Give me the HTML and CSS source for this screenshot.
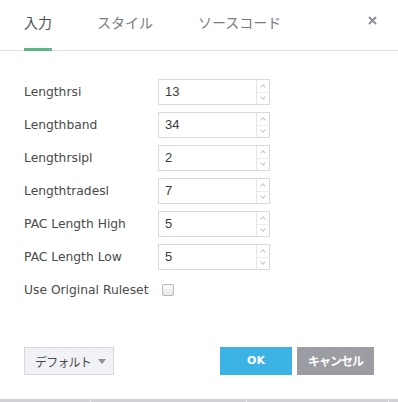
FILE: index.html
```html
<!DOCTYPE html>
<html lang="ja">
<head>
    <meta charset="UTF-8">
    <title>Inputs</title>
    <link rel="stylesheet" href="styles.css">
</head>
<body>
    <div class="dialog">
        <header class="tabs">
            <div class="tab active">入力</div>
            <div class="tab">スタイル</div>
            <div class="tab">ソースコード</div>
            <div class="close">
                <svg width="9" height="9" viewBox="0 0 9 9"><path d="M1 1L8 8M8 1L1 8" stroke="#8c8f96" stroke-width="2"/></svg>
            </div>
        </header>

        <main class="form">
            <div class="row">
                <label>Lengthrsi</label>
                <div class="spin"><span class="value">13</span><span class="arrows"><i class="up"></i><i class="down"></i></span></div>
            </div>
            <div class="row">
                <label>Lengthband</label>
                <div class="spin"><span class="value">34</span><span class="arrows"><i class="up"></i><i class="down"></i></span></div>
            </div>
            <div class="row">
                <label>Lengthrsipl</label>
                <div class="spin"><span class="value">2</span><span class="arrows"><i class="up"></i><i class="down"></i></span></div>
            </div>
            <div class="row">
                <label>Lengthtradesl</label>
                <div class="spin"><span class="value">7</span><span class="arrows"><i class="up"></i><i class="down"></i></span></div>
            </div>
            <div class="row">
                <label>PAC Length High</label>
                <div class="spin"><span class="value">5</span><span class="arrows"><i class="up"></i><i class="down"></i></span></div>
            </div>
            <div class="row">
                <label>PAC Length Low</label>
                <div class="spin"><span class="value">5</span><span class="arrows"><i class="up"></i><i class="down"></i></span></div>
            </div>
            <div class="row check-row">
                <span class="check-label">Use Original Ruleset</span>
                <span class="checkbox"></span>
            </div>
        </main>

        <footer class="actions">
            <div class="defaults"><span>デフォルト</span><span class="caret"></span></div>
            <div class="btn ok">OK</div>
            <div class="btn cancel">キャンセル</div>
        </footer>

        <div class="bottom-edge">
            <span class="tick t1"></span>
            <span class="tick t2"></span>
            <span class="tick t3"></span>
        </div>
    </div>
</body>
</html>
```

FILE: styles.css
```css
body {
    margin: 0;
    padding: 0;
    background-color: #fff;
    font-family: "DejaVu Sans", sans-serif;
    color: #4a4a4a;
}

.dialog {
    width: 398px;
    height: 402px;
    position: relative;
    overflow: hidden;
}

.tabs {
    display: flex;
    align-items: flex-end;
    height: 50px;
    padding: 0 0 0 24px;
    border-bottom: 1px solid #e0e3eb;
}

.tab {
    font-family: "Noto Sans CJK JP", sans-serif;
    font-size: 14px;
    line-height: 20px;
    color: #787b86;
    padding-bottom: 16px;
    margin-right: 45px;
    margin-bottom: -1px;
    border-bottom: 3px solid transparent;
}

.tab.active {
    color: #4b4f58;
    border-bottom-color: #5cb88b;
}

.close {
    margin-left: auto;
    align-self: flex-start;
    padding: 16px 21px 0 0;
    line-height: 0;
}

.form {
    display: flex;
    flex-direction: column;
    gap: 7px;
    padding: 28px 24px 0;
}

.row {
    display: flex;
    align-items: center;
    height: 26px;
}

.row label {
    width: 134px;
    font-size: 12.3px;
}

.spin {
    display: flex;
    width: 110px;
    height: 24px;
    border: 1px solid #d6d9e0;
}

.value {
    flex: 1;
    font-family: "Liberation Sans", Arial, sans-serif;
    font-size: 13px;
    line-height: 24px;
    padding-left: 6px;
    color: #3b3b3b;
}

.arrows {
    width: 12px;
    display: flex;
    flex-direction: column;
    border-left: 1px solid #e3e5ea;
}

.arrows i {
    flex: 1;
    position: relative;
}

.arrows .up {
    border-bottom: 1px solid #eceef2;
}

.arrows i::after {
    content: "";
    position: absolute;
    left: 4px;
    width: 3px;
    height: 3px;
    border-left: 1px solid #c4c7ce;
    border-top: 1px solid #c4c7ce;
}

.arrows .up::after {
    top: 5px;
    transform: rotate(45deg);
}

.arrows .down::after {
    top: 2px;
    transform: rotate(-135deg);
}

.check-row {
    gap: 14px;
}

.check-label {
    font-size: 12.3px;
}

.checkbox {
    width: 10px;
    height: 10px;
    border: 1px solid #b7b9bf;
    border-radius: 2px;
    background: linear-gradient(#fbfbfb, #e8e8ea);
}

.actions {
    display: flex;
    align-items: center;
    gap: 5px;
    padding: 44px 24px 0;
}

.defaults {
    display: flex;
    align-items: center;
    box-sizing: border-box;
    width: 90px;
    height: 28px;
    padding-left: 10px;
    background-color: #f1f2f6;
    border: 1px solid #d5d7dd;
    font-family: "Noto Sans CJK JP", sans-serif;
    font-size: 12px;
    letter-spacing: -0.8px;
    white-space: nowrap;
    color: #4a4a4a;
    margin-right: auto;
}

.caret {
    margin-left: 7px;
    width: 0;
    height: 0;
    border-left: 4px solid transparent;
    border-right: 4px solid transparent;
    border-top: 5px solid #8f9197;
}

.btn {
    height: 28px;
    line-height: 27px;
    text-align: center;
    color: #fff;
    font-weight: bold;
    font-family: "Noto Sans CJK JP", sans-serif;
    white-space: nowrap;
}

.ok {
    width: 72px;
    background-color: #3bb3e4;
    font-family: "DejaVu Sans", sans-serif;
    font-size: 11px;
}

.cancel {
    width: 77px;
    background-color: #9c9da3;
    font-size: 12px;
    letter-spacing: -1px;
}

.bottom-edge {
    position: absolute;
    left: 0;
    right: 0;
    top: 399px;
    height: 3px;
    background-color: #cfd1d5;
}

.tick {
    position: absolute;
    top: 0;
    width: 1px;
    height: 3px;
    background-color: #e9eaec;
}

.t1 { left: 90px; }
.t2 { left: 246px; }
.t3 { left: 388px; }
```
